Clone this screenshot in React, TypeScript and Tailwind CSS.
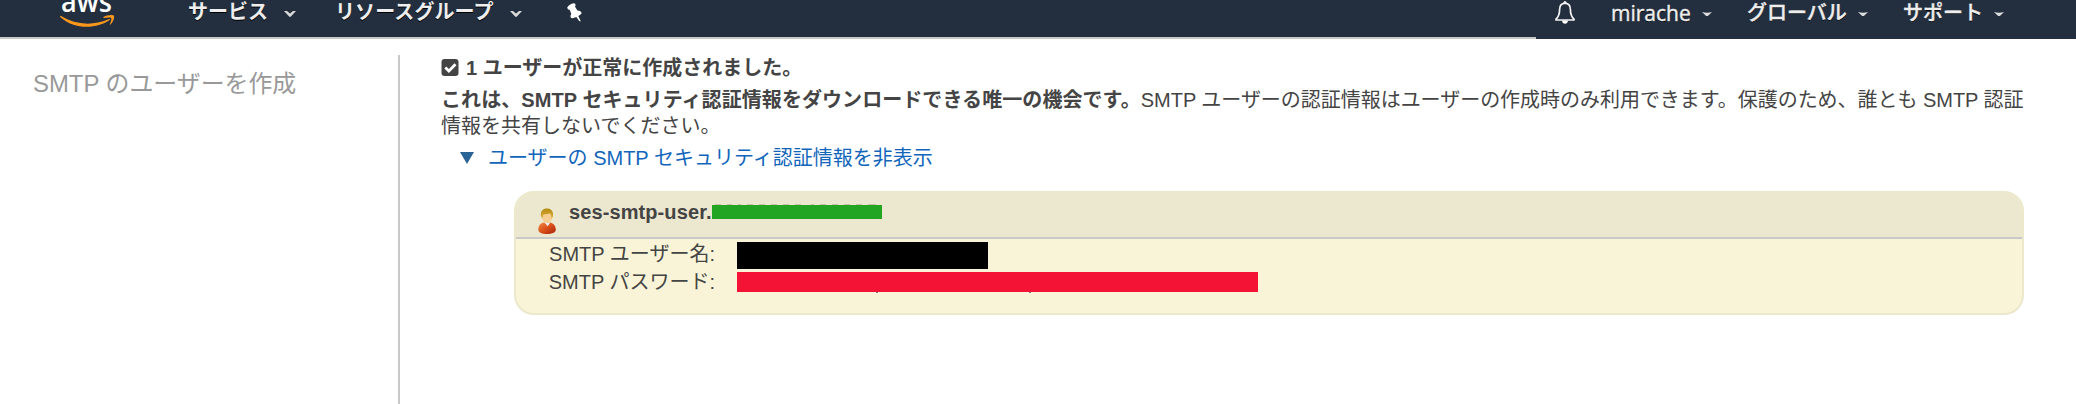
import React from "react";

const jp = "font-['Liberation_Sans','Noto_Sans_CJK_JP',sans-serif]";

function Chevron({ className = "" }: { className?: string }) {
  return (
    <svg className={`block shrink-0 ${className}`} width="12" height="6" viewBox="0 0 12 6">
      <path d="M0 0H3L6 2.6 9 0H12L6.9 5.5Q6 6.3 5.1 5.5Z" fill="#d8d8d8" />
    </svg>
  );
}

function Caret({ className = "" }: { className?: string }) {
  return (
    <svg className={`block shrink-0 ${className}`} width="10" height="4" viewBox="0 0 10 4">
      <path d="M0 0Q5 1.4 10 0L6.4 3.4Q5 4.4 3.6 3.4Z" fill="#dcdcdc" />
    </svg>
  );
}

function AwsLogo() {
  return (
    <svg className="block" width="56" height="30" viewBox="0 0 56 30">
      <text x="1" y="11.6" fontSize="28" fontFamily="Open Sans" fontWeight="600" fill="#fff" textLength="51" lengthAdjust="spacingAndGlyphs">aws</text>
      <path d="M.6 15.8C16 25 32 26 48.5 19.3Q50.3 18.6 49.8 20C36 29.5 14 29.5 .5 17.2Q-.4 16 .6 15.8Z" fill="#f7981d" />
      <path d="M43.3 17.2C46 15 52.5 14.4 53.8 15.6C54.8 17 53.3 22.4 50.5 24.6Q49.6 25 49.9 24C51.2 20.8 51.8 18.6 51.1 17.9C50.3 17.2 47.5 17.5 44.2 17.9Q42.6 18 43.3 17.2Z" fill="#f7981d" />
    </svg>
  );
}

function Pin() {
  return (
    <svg className="block shrink-0" width="15" height="19" viewBox="0 0 15 19">
      <path d="M.2 4.4Q2.2 1.2 6.8.3Q8.6.2 8.6 2.2L8 3.6L10.4 7.6Q13.6 7.6 14.8 10Q13.6 11.9 11.3 13L13.8 18.3L12.4 18.2L9.3 14.1Q6.6 15.5 4 15Q2.6 12.6 4.3 10.9L2.8 7Q.4 6.8 .2 4.4Z" fill="#fff" />
    </svg>
  );
}

function Bell() {
  return (
    <svg className="block shrink-0" width="20" height="23" viewBox="0 0 20 23" fill="none">
      <path d="M10 2.2C6.4 2.5 4.6 5 4.6 8.5C4.6 13.5 3.6 15.8 1 18.2V19H19V18.2C16.4 15.8 15.4 13.5 15.4 8.5C15.4 5 13.6 2.5 10 2.2Z" stroke="#f4f4f4" strokeWidth="1.7" strokeLinejoin="round" />
      <circle cx="10" cy="1.5" r="1.5" fill="#f4f4f4" />
      <path d="M7 19.5H13Q12.5 22.7 10 22.7T7 19.5Z" fill="#fff" />
    </svg>
  );
}

function CheckBadge() {
  return (
    <svg className="mt-[2px] block shrink-0" width="18" height="17" viewBox="0 0 18 17">
      <rect x=".5" width="17" height="17" rx="3" fill="#444" />
      <path d="M4.3 8.4 7.9 12 14.5 5.2" fill="none" stroke="#fff" strokeWidth="2.8" />
    </svg>
  );
}

function UserIcon() {
  return (
    <svg className="block shrink-0" width="18" height="26" viewBox="0 0 18 26">
      <defs>
        <linearGradient id="shirt" x1="0" y1="0" x2="1" y2="1">
          <stop offset="0" stopColor="#f08a45" />
          <stop offset=".5" stopColor="#d9501a" />
          <stop offset="1" stopColor="#a81f0c" />
        </linearGradient>
        <linearGradient id="hair" x1="0" y1="0" x2="0" y2="1">
          <stop offset="0" stopColor="#b58a10" />
          <stop offset="1" stopColor="#e0b040" />
        </linearGradient>
      </defs>
      <path d="M.3 21.5C.3 17 3 15 6 14.4H12C15.5 15 17.8 18 17.8 21.8C17.8 24.6 14 26 9 26S.3 24.8 .3 21.5Z" fill="url(#shirt)" />
      <path d="M6 14.2H12.4L9.8 18.2Z" fill="#e6ecef" />
      <ellipse cx="9.2" cy="8.8" rx="5" ry="6.3" fill="#f7cf94" />
      <path d="M3 8.5C2 3 5 .4 9 .4S16 3 14.9 8.8L13.4 11C13.8 7.5 12.5 6 11.5 5.2C9.5 6.6 6 5.6 4.8 7.4L4.6 10.8Z" fill="url(#hair)" />
    </svg>
  );
}

function Header() {
  return (
    <header className="flex h-[39px] items-start overflow-hidden bg-[#232f3e] text-[20px] leading-[24px] text-[#eeeeee] [text-shadow:0_1px_0_#000]">
      <div className="flex h-[39px] w-[1536px] shrink-0 items-start border-b-2 border-[#c8c8c8]">
        <div className="ml-[60px] w-[56px] [text-shadow:none]"><AwsLogo /></div>
        <span className="ml-[72px] w-[96px] whitespace-nowrap font-bold">サービス</span>
        <Chevron className="mt-[11px]" />
        <span className="ml-[39px] w-[175px] whitespace-nowrap font-bold tracking-[0.1px]">リソースグループ</span>
        <Chevron className="mt-[11px]" />
        <div className="ml-[45px] mt-[3px]"><Pin /></div>
      </div>
      <div className="flex w-[540px] shrink-0 items-start whitespace-nowrap font-medium">
        <div className="ml-[19px] mt-px"><Bell /></div>
        <span className="ml-[36px] w-[91px] pt-px font-['Open_Sans',sans-serif] text-[21px] [-webkit-text-stroke:0.4px_#eeeeee]">mirache</span>
        <Caret className="mt-[12px]" />
        <span className="ml-[35px] w-[111px] pt-px [-webkit-text-stroke:0.4px_#eeeeee]">グローバル</span>
        <Caret className="mt-[12px]" />
        <span className="ml-[35px] w-[91px] pt-px [-webkit-text-stroke:0.4px_#eeeeee]">サポート</span>
        <Caret className="mt-[12px]" />
      </div>
    </header>
  );
}

function CredentialCard() {
  return (
    <section className="ml-[73px] mt-[20px] h-[124px] w-[1510px] overflow-hidden rounded-[20px] border-2 border-[#ebe8cb] bg-[#f9f4d8]">
      <div className="flex h-[46px] items-start border-b-2 border-[#c9c9c9] bg-[#ece7cf]">
        <div className="ml-[22px] mt-[15px]"><UserIcon /></div>
        <b className="ml-[13px] mt-[7px] w-[143px] whitespace-nowrap leading-[24px] tracking-[0.1px]">ses-smtp-user.</b>
        <div className="mt-[11px]">
          <div className="flex h-px w-[170px] items-start gap-[6px] pl-[3px]">
            {[6, 5, 3, 6, 6, 6, 6, 6].map((w, i) => <i key={i} className="h-px bg-[#c4c1b0]" style={{ width: w }} />)}
            <i className="ml-[4px] h-px w-[3px] bg-[#c4c1b0]" />
            {[6, 6, 6, 6, 8].map((w, i) => <i key={i} className="h-px bg-[#c4c1b0]" style={{ width: w }} />)}
          </div>
          <div className="h-[14px] w-[170px] bg-[#22a522]" />
        </div>
      </div>
      <dl className="grid grid-cols-[199px_1fr] grid-rows-[28px_28px] gap-x-[22px] pt-[2px]">
        <dt className="whitespace-nowrap text-right leading-[26px]">SMTP ユーザー名:</dt>
        <dd className="mt-px h-[27px] w-[251px] bg-black" />
        <dt className="whitespace-nowrap text-right leading-[26px]">SMTP パスワード:</dt>
        <dd className="mt-[3px]">
          <div className="h-[20px] w-[521px] bg-[#f41235]" />
          <div className="flex h-px">
            <i className="ml-[139px] h-px w-[2px] bg-[#777]" />
            <i className="ml-[151px] h-px w-[2px] bg-[#777]" />
          </div>
        </dd>
      </dl>
    </section>
  );
}

export default function App() {
  return (
    <div className={`flex h-[404px] w-[2076px] flex-col overflow-hidden bg-white text-[20px] text-[#444] ${jp}`} lang="ja">
      <Header />
      <div className="flex flex-1 pt-[16px]">
        <aside className="w-[398px] shrink-0 pl-[33px] pt-[13px] text-[23.9px] leading-[32px] text-[#999]">SMTP のユーザーを作成</aside>
        <main className="flex-1 border-l-2 border-[#c8c8c8] pl-[41px]">
          <p className="flex gap-[7px] pt-[2px] font-bold leading-[22px]">
            <CheckBadge />
            <span>1 ユーザーが正常に作成されました。</span>
          </p>
          <p className="mt-[8px] w-[1610px] leading-[26px]">
            <b className="tracking-[0.07px]">これは、SMTP セキュリティ認証情報をダウンロードできる唯一の機会です。</b>
            <span className="tracking-[-0.03px]">SMTP ユーザーの認証情報はユーザーの作成時のみ利用できます。保護のため、誰とも SMTP 認証</span>
            <br />情報を共有しないでください。
          </p>
          <p className="mt-[6px] flex items-start pl-[19px] leading-[26px] text-[#1166bb]">
            <svg className="mt-[7px] block shrink-0" width="14" height="12" viewBox="0 0 14 12"><path d="M0 0H14L7 12Z" fill="#2a6496" /></svg>
            <span className="ml-[14px]">ユーザーの SMTP セキュリティ認証情報を非表示</span>
          </p>
          <CredentialCard />
        </main>
      </div>
    </div>
  );
}
